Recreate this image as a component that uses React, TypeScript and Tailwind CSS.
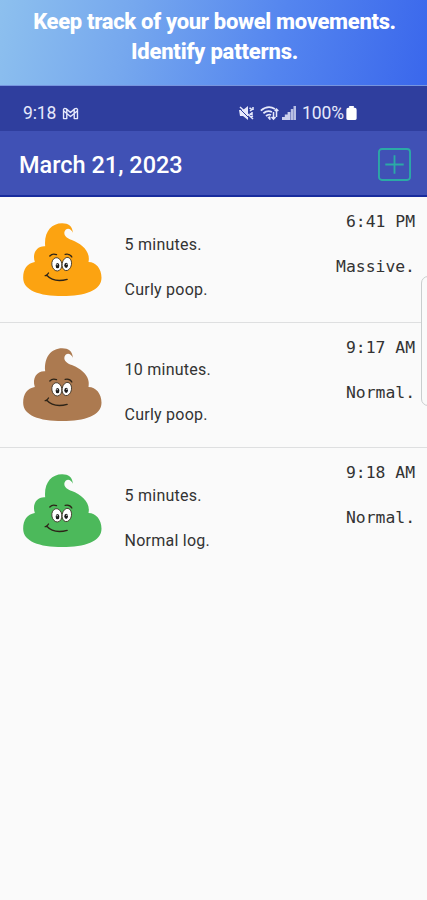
type Entry = {
  time: string
  duration: string
  kind: string
  size: string
  color: string
}

const ENTRIES: Entry[] = [
  { time: "6:41 PM", duration: "5 minutes.", kind: "Curly poop.", size: "Massive.", color: "#fca311" },
  { time: "9:17 AM", duration: "10 minutes.", kind: "Curly poop.", size: "Normal.", color: "#ac7a50" },
  { time: "9:18 AM", duration: "5 minutes.", kind: "Normal log.", size: "Normal.", color: "#4cb95b" },
]

function PoopIcon({ color }: { color: string }) {
  return (
    <svg viewBox="0 0 236 219" className="mt-[25.5px] h-[73px] w-[79px] shrink-0" aria-hidden>
      <path
        fill={color}
        d="M66 70C62 28 84 1 117 1C136 1 148 10 149 29C142 13 128 14 124 26C121 38 132 46 146 51C174 62 203 84 196 117C219 117 235 138 235 164C235 203 184 219 118 219C48 219 0 202 0 164C0 138 12 121 35 117C26 90 42 68 66 70Z"
      />
      <g fill="none" stroke="#2d2418" strokeWidth="4" strokeLinecap="round">
        <path d="M80 99q8 -9 20 -4M126 94q14 -3 20 8" />
        <path d="M70 156q22 24 62 13M66 158q6 0 10 -8" />
      </g>
      <g fill="#fff" stroke="#3b3124" strokeWidth="2.5">
        <ellipse cx="101" cy="124" rx="15" ry="20" transform="rotate(-8 101 124)" />
        <ellipse cx="131" cy="123" rx="14" ry="20" transform="rotate(10 131 123)" />
      </g>
      <g fill="#1b1b1b">
        <ellipse cx="103" cy="128" rx="5.5" ry="8" />
        <ellipse cx="129" cy="127" rx="5.5" ry="8" />
      </g>
      <g fill="#fff">
        <circle cx="102" cy="125" r="1.8" />
        <circle cx="131" cy="124" r="1.8" />
      </g>
    </svg>
  )
}

function StatusBar() {
  return (
    <div className="flex h-[45px] items-center bg-[#2f3e9e] pt-[9px] pr-[70px] pl-[23px] font-['Roboto',sans-serif] text-[17.5px] text-[#e6e9fb]">
      <span className="tracking-[-0.1px]">9:18</span>
      <svg viewBox="0 0 17 14" className="ml-[6px] h-[13px] w-[17px]" fill="none" stroke="currentColor" strokeWidth="1.5" strokeLinejoin="round" aria-hidden>
        <path d="M1 12.5V2.5Q2 .7 4 2L8.5 6L13 2Q15 .7 16 2.5V12.5H12.5V7L8.5 10.2L4.5 7V12.5ZM4.5 2.5V7M12.5 2.5V7M1 4L4.5 7M16 4L12.5 7" />
      </svg>
      <svg viewBox="0 0 16 14" className="ml-auto h-[14px] w-[16px]" fill="currentColor" aria-hidden>
        <path d="M0 4h4l5-4v14l-5-4H1z" />
        <path d="M1 1L14 13M10.5 2l2 1M11 5l3-2M10.5 8.5l3-2M11 11l3-1M14 1v3M13 6v3" fill="none" stroke="currentColor" strokeWidth="1.5" />
        <path d="M0 2L11 13" stroke="#2f3e9e" strokeWidth="1" />
      </svg>
      <svg viewBox="0 0 19 15" className="ml-[5px] h-[15px] w-[19px]" fill="none" stroke="currentColor" strokeWidth="1.8" aria-hidden>
        <path d="M.8 4.6Q8 -1.5 15 3M3.4 7.2Q7.5 3.7 12 6M6 10Q8.5 7.8 11 9" />
        <path d="M8 11.5l2-.8v3z" fill="currentColor" strokeWidth="1" />
        <path d="M13.5 13V6M11.5 11L13.5 13.2L15.5 11M16.5 3v8M14.7 5l1.8-2L18.3 5" strokeWidth="1.5" />
      </svg>
      <svg viewBox="0 0 14 14" className="ml-[3px] h-[14px] w-[14px]" fill="currentColor" aria-hidden>
        <path d="M0 11h2.8V14H0zM2.8 8.5h2.8v5.5H2.8zM5.6 6h2.8v8H5.6z" opacity=".85" />
        <path d="M8.8 3h2.4V14H8.8zM11.5 0H14v14h-2.5z" opacity=".75" />
      </svg>
      <span className="ml-[6px] tracking-[-0.1px]">100%</span>
      <svg viewBox="0 0 11 15" className="ml-[2px] h-[14px] w-[11px]" fill="#fff" aria-hidden>
        <path d="M3 0h5v2H9q2 .3 2 2v9.500Q11 15 9.500 15H1.500Q0 15 0 13.500V4Q0 2.300 2 2h1z" />
      </svg>
    </div>
  )
}

function EntryRow({ entry }: { entry: Entry }) {
  return (
    <li className="flex h-[125.5px] border-b border-[#dedfe0] pr-[12px] pl-[22.5px] text-[#333] last:border-transparent">
      <PoopIcon color={entry.color} />
      <div className="ml-[23px] pt-[36.5px] font-['Roboto',sans-serif] text-[16px] leading-[22px] tracking-[0.25px]">
        <p>{entry.duration}</p>
        <p className="mt-[23px]">{entry.kind}</p>
      </div>
      <div className="ml-auto pt-[14px] text-right font-['DejaVu_Sans_Mono',monospace] text-[16.4px] leading-[22px]">
        <p>{entry.time}</p>
        <p className="mt-[23px]">{entry.size}</p>
      </div>
    </li>
  )
}

export default function App() {
  return (
    <div className="relative flex h-[900px] w-[427px] flex-col overflow-hidden bg-[#fafafa]">
      <header className="h-[86px] shrink-0 border-b border-[#7795df] bg-linear-[102deg,#8dc0ee_0%,#76a8ee_30%,#5485ef_65%,#3a67ec_100%] pt-[7px] pl-[2px] text-center font-['Roboto',sans-serif] text-[22px] leading-[30px] font-extrabold text-white">
        <p className="tracking-[-0.32px]">Keep track of your bowel movements.</p>
        <p className="tracking-[-0.2px]">Identify patterns.</p>
      </header>
      <StatusBar />
      <div className="flex h-[66px] shrink-0 items-center justify-between border-b-2 border-[#182c9d] bg-[#4051b5] pr-[16.5px] pl-[19px]">
        <h1 className="pt-[5px] font-['Roboto',sans-serif] text-[23.5px] font-medium text-white">March 21, 2023</h1>
        <button type="button" aria-label="Add entry" className="pt-[3px] text-[#2baaa6]">
          <svg viewBox="0 0 34 34" className="h-[33px] w-[33px]" fill="none" stroke="currentColor" strokeWidth="1.9" aria-hidden>
            <rect x="1" y="1" width="32" height="32" rx="3" />
            <path d="M17 7.5v19M7.5 17h19" />
          </svg>
        </button>
      </div>
      <ul>
        {ENTRIES.map((entry) => (
          <EntryRow key={entry.time} entry={entry} />
        ))}
      </ul>
      {/* edge panel handle */}
      <div className="absolute top-[276px] right-[-8px] h-[130px] w-[14px] rounded-[7px] border border-[#c9cdce] bg-[#fafafa]" />
    </div>
  )
}
